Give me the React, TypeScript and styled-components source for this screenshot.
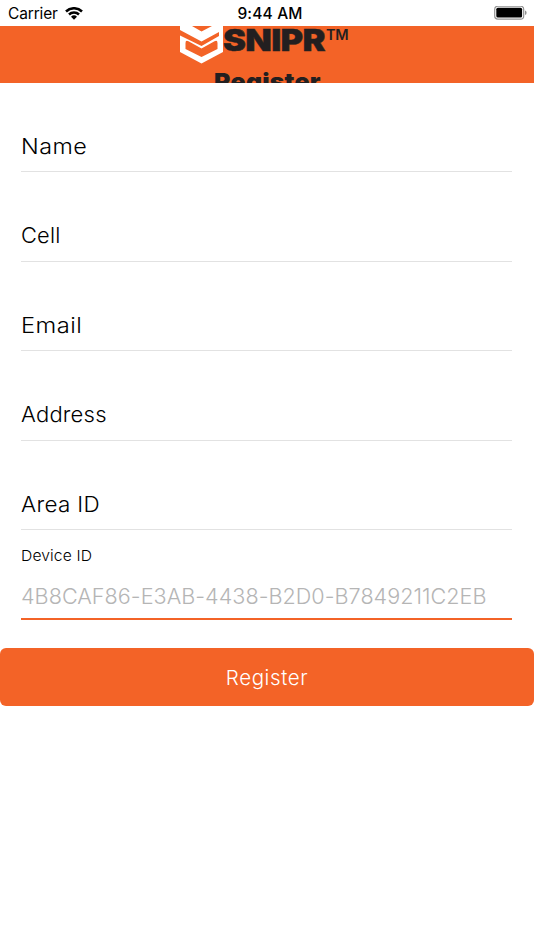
import React from "react";
import styled, { createGlobalStyle } from "styled-components";

const Global = createGlobalStyle`
  * { box-sizing: border-box; }
  body { margin: 0; background: #fff; font-family: Inter, "Open Sans", sans-serif; color: #000; }
`;
const Screen = styled.main`
  width: 534px; height: 950px; background: #fff; overflow: hidden;
`;
const StatusBar = styled.div`
  height: 26px; display: grid; grid-template-columns: 1fr auto 1fr;
  align-items: center; padding: 1px 7px 0 8px; font-size: 15.5px; line-height: 24px;
`;
const Carrier = styled.div`
  display: flex; align-items: center; gap: 7px; font-size: 15.5px; letter-spacing: -0.15px;
`;
const Time = styled.div`font-weight: 500; letter-spacing: 0.15px; margin-left: 5px;`;
const Power = styled.div`display: flex; justify-content: flex-end;`;
const Header = styled.header`
  height: 57px; overflow: hidden; background: #f36327; color: #231f20;
  display: flex; flex-direction: column; align-items: center;
`;
const Brand = styled.div`
  display: flex; width: 171px; height: 38px; margin-right: 3px;
  flex: none; white-space: nowrap;
`;
const BrandName = styled.span`
  width: 103px; font-weight: 900; font-size: 30px; line-height: 28px; letter-spacing: -0.6px;
  transform: scaleX(1.15); transform-origin: left; flex: none; -webkit-text-stroke: 0.4px #231f20;
`;
const Trademark = styled.span`
  font-weight: 600; font-size: 14.5px; line-height: 18px; letter-spacing: -0.4px;
`;
const Title = styled.h1`
  margin: 3px 0 0; font-size: 23px; line-height: 30px; font-weight: 900; letter-spacing: 0.2px;
  flex: none; transform: scaleX(1.08);
`;
const Form = styled.form`display: flex; flex-direction: column;`;
const Field = styled.label<{ $h: number; $b: number }>`
  height: ${(p) => p.$h}px; margin: 0 22px 0 21px; padding-bottom: ${(p) => p.$b}px;
  border-bottom: 1px solid #e2e2e2; display: flex; align-items: flex-end;
  font-size: 21.6px; line-height: 28px;
`;
const DeviceField = styled.div`
  height: 90px; margin: 0 22px 0 21px; border-bottom: 2px solid #f36327; padding-top: 15px;
`;
const Caption = styled.div`font-size: 15px; line-height: 22px;`;
const DeviceValue = styled.div`
  margin-top: 15px; font-size: 21.6px; line-height: 28px; font-weight: 300;
  letter-spacing: 0.03px; color: #b5b5b5; white-space: nowrap;
`;
const Submit = styled.button`
  margin-top: 28px; height: 58px; border: 0; border-radius: 6px; background: #f36327; color: #fff;
  font: 300 20.5px/58px Inter, sans-serif; padding: 1px 0 0;
`;
const Word = styled.span<{ $s?: number; $x?: number }>`
  display: inline-block; letter-spacing: ${(p) => p.$s ?? 0}px; font-weight: 350;
  transform: scaleX(${(p) => p.$x ?? 1}); transform-origin: left;
`;

const fields = [
  { label: "Name", h: 89, b: 11, s: 0.4, x: 1.08 },
  { label: "Cell", h: 90, b: 12, s: 0.2, x: 1.01 },
  { label: "Email", h: 89, b: 11, s: 0.4, x: 1.1 },
  { label: "Address", h: 90, b: 12, s: 0.2, x: 1.02 },
  { label: "Area ID", h: 89, b: 11, s: 0.3, x: 1.04 },
];

export default function App() {
  return (
    <Screen>
      <Global />
      <StatusBar>
        <Carrier>
          Carrier
          <svg width="18" height="14" viewBox="0 0 18 14" fill="none" stroke="#000" strokeWidth="2.5">
            <path d="M1 4.5A11.4 11.4 0 0 1 17 4.5M4 7.5A7.2 7.2 0 0 1 14 7.5" />
            <path d="M6 9.7A4.3 4.3 0 0 1 12 9.7L9 12.8Z" fill="#000" stroke="none" />
          </svg>
        </Carrier>
        <Time>9:44 AM</Time>
        <Power>
          <svg width="33" height="15" viewBox="0 0 33 15">
            <rect x=".7" y=".2" width="29" height="13" rx="3.2" fill="#fff" stroke="#929292" strokeWidth="1.2" />
            <rect x="2.3" y="1.8" width="25.8" height="9.8" rx="1.5" />
            <path d="M31.2 4.5v4.5q1.3-.6 1.3-2.25T31.2 4.5Z" fill="#777" />
          </svg>
        </Power>
      </StatusBar>
      <Header>
        <Brand>
          <svg width="43" height="38" viewBox="0 0 43 38">
            <path
              fill="#fff"
              d="M0 9.5L21.5 20L39 10V6L21.5 15.5L0 4V0H12L21.5 5.5L32 0H43V26L21.5 37.5L0 26Z"
            />
            <path fill="#f36327" d="M5.5 17Q5.5 13.8 8.5 15.3L21.5 22.5L34.5 15.3Q37.5 13.8 37.5 17V23L21.5 31L5.5 23Z" />
          </svg>
          <BrandName>SNIPR</BrandName>
          <Trademark>TM</Trademark>
        </Brand>
        <Title>Register</Title>
      </Header>
      <Form onSubmit={(e) => e.preventDefault()}>
        {fields.map((f) => (
          <Field key={f.label} $h={f.h} $b={f.b}><Word $s={f.s} $x={f.x}>{f.label}</Word></Field>
        ))}
        <DeviceField>
          <Caption><Word $s={0.1} $x={1.045}>Device ID</Word></Caption>
          <DeviceValue>4B8CAF86-E3AB-4438-B2D0-B7849211C2EB</DeviceValue>
        </DeviceField>
        <Submit><Word $s={0.6}>Register</Word></Submit>
      </Form>
    </Screen>
  );
}
